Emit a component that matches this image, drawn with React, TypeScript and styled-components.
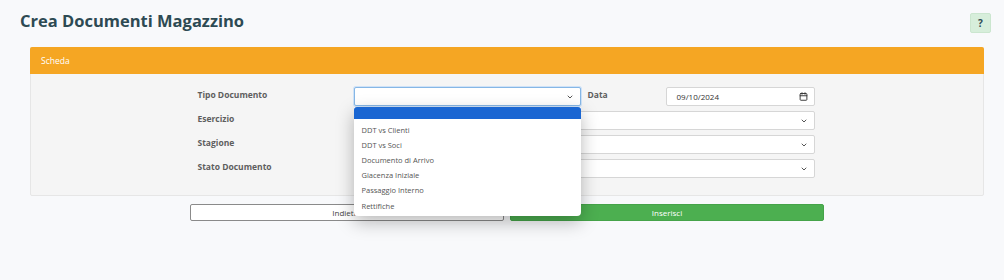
import styled, { createGlobalStyle } from 'styled-components';
import { ChevronDown, Calendar } from 'lucide-react';

const tipi = [
  'DDT vs Clienti',
  'DDT vs Soci',
  'Documento di Arrivo',
  'Giacenza Iniziale',
  'Passaggio Interno',
  'Rettifiche',
];

const App = () => {
  return (
    <>
      <GlobalStyle />
      <Page>
        <TopBar>
          <Title>Crea Documenti Magazzino</Title>
          <HelpButton>?</HelpButton>
        </TopBar>
        <Card>
          <CardHeader>Scheda</CardHeader>
          <CardBody>
            <FormGrid>
              <Label>Tipo Documento</Label>
              <SelectCell>
                <FakeSelect focused>
                  <span />
                  <ChevronDown size={8} strokeWidth={2.5} />
                </FakeSelect>
                <OptionList>
                  <OptionItem selected />
                  {tipi.map((t) => (
                    <OptionItem key={t}>{t}</OptionItem>
                  ))}
                </OptionList>
              </SelectCell>
              <Label indent>Data</Label>
              <FakeSelect>
                <DateText>09/10/2024</DateText>
                <Calendar size={9} strokeWidth={2.5} />
              </FakeSelect>

              <Label>Esercizio</Label>
              <WideCell>
                <FakeSelect>
                  <span />
                  <ChevronDown size={8} strokeWidth={2.5} />
                </FakeSelect>
              </WideCell>

              <Label>Stagione</Label>
              <WideCell>
                <FakeSelect>
                  <span />
                  <ChevronDown size={8} strokeWidth={2.5} />
                </FakeSelect>
              </WideCell>

              <Label>Stato Documento</Label>
              <WideCell>
                <FakeSelect>
                  <span />
                  <ChevronDown size={8} strokeWidth={2.5} />
                </FakeSelect>
              </WideCell>
            </FormGrid>
          </CardBody>
        </Card>
        <ButtonRow>
          <Button>Indietro</Button>
          <Button primary>Inserisci</Button>
        </ButtonRow>
      </Page>
    </>
  );
};

const GlobalStyle = createGlobalStyle`
  html, body {
    margin: 0;
    background: #f8f9fb;
    font-family: 'Open Sans', 'Liberation Sans', sans-serif;
  }
`;

const Page = styled.div`
  position: relative;
  width: 1004px;
  height: 280px;
  padding: 11px 13px 0 20px;
  box-sizing: border-box;
`;

const TopBar = styled.div`
  display: flex;
  justify-content: space-between;
  align-items: flex-start;
  height: 36px;
`;

const Title = styled.h1`
  margin: 0;
  font-size: 16.5px;
  font-weight: 700;
  color: #2d4a53;
  line-height: 20px;
`;

const HelpButton = styled.div`
  display: flex;
  align-items: center;
  justify-content: center;
  width: 21px;
  height: 20px;
  margin-top: 2px;
  border-radius: 2px;
  background: #d7eedb;
  border: 1px solid #cbe6cf;
  box-sizing: border-box;
  color: #2d4a53;
  font-size: 10px;
  font-weight: 700;
`;

const Card = styled.div`
  margin-left: 10px;
  margin-right: 7px;
  background: #f5f5f5;
  border: 1px solid #e6e6e6;
  border-radius: 2px;
`;

const CardHeader = styled.div`
  height: 27px;
  display: flex;
  align-items: center;
  padding-left: 11px;
  background: #f5a623;
  color: #fff;
  font-size: 8.5px;
  margin: -1px -1px 0 -1px;
  border-radius: 2px 2px 0 0;
`;

const CardBody = styled.div`
  display: flex;
  justify-content: center;
  padding: 13px 0 17px 0;
`;

const FormGrid = styled.div`
  display: grid;
  grid-template-columns: 156px 227px 85px 149px;
  grid-auto-rows: 19px;
  row-gap: 5px;
  margin-left: -2px;
`;

const Label = styled.div<{ indent?: boolean }>`
  display: flex;
  align-items: center;
  padding-left: ${(p) => (p.indent ? '7px' : '0')};
  padding-bottom: 4px;
  font-size: 8.5px;
  font-weight: 700;
  color: #5e5e5e;
`;

const SelectCell = styled.div`
  position: relative;
`;

const WideCell = styled.div`
  grid-column: 2 / 5;
`;

const FakeSelect = styled.div<{ focused?: boolean }>`
  display: flex;
  align-items: center;
  justify-content: space-between;
  height: 19px;
  padding: 0 6px 0 10px;
  box-sizing: border-box;
  background: #fff;
  border: 1px solid ${(p) => (p.focused ? '#86b7e6' : '#d6d6d6')};
  border-radius: 2px;
  box-shadow: ${(p) => (p.focused ? '0 0 0 1px #cfe2f7' : 'none')};
  color: #333;
`;

const DateText = styled.span`
  font-size: 8px;
  color: #333;
`;

const OptionList = styled.div`
  position: absolute;
  top: 20px;
  left: 0;
  width: 227px;
  padding-bottom: 3px;
  background: #fff;
  border-radius: 0 0 4px 4px;
  box-shadow: 0 6px 18px rgba(0, 0, 0, 0.28);
  z-index: 10;
`;

const OptionItem = styled.div<{ selected?: boolean }>`
  display: flex;
  align-items: center;
  height: ${(p) => (p.selected ? '12px' : '15.2px')};
  margin-bottom: ${(p) => (p.selected ? '3px' : '0')};
  padding-left: 8px;
  background: ${(p) => (p.selected ? '#1a66d2' : 'transparent')};
  border-radius: ${(p) => (p.selected ? '3px 3px 0 0' : '0')};
  font-size: 7.5px;
  color: #555;
`;

const ButtonRow = styled.div`
  display: flex;
  justify-content: center;
  gap: 6px;
  margin-top: 8px;
  margin-left: 10px;
  margin-right: 7px;
`;

const Button = styled.div<{ primary?: boolean }>`
  display: flex;
  align-items: center;
  justify-content: center;
  width: 314px;
  height: 17px;
  box-sizing: border-box;
  border-radius: 2px;
  font-size: 8px;
  background: ${(p) => (p.primary ? '#4caf50' : '#fff')};
  border: 1px solid ${(p) => (p.primary ? '#45a349' : '#8a8a8a')};
  color: ${(p) => (p.primary ? '#fff' : '#444')};
`;

export default App;
